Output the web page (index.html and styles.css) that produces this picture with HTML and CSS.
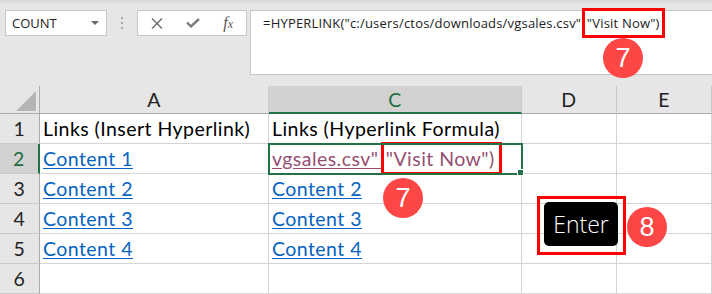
FILE: index.html
```html
<!DOCTYPE html>
<html lang="en">
<head>
    <meta charset="UTF-8">
    <title>Excel - HYPERLINK</title>
    <link rel="stylesheet" href="styles.css">
</head>
<body>
    <div class="toolbar">
        <div class="namebox">
            <span>COUNT</span>
            <span class="caret"></span>
        </div>
        <div class="dots"><span></span><span></span><span></span></div>
        <div class="fxbox">
            <span class="btn">
                <svg width="12" height="11" viewBox="0 0 12 11"><path d="M1 0.5 L11 10.5 M11 0.5 L1 10.5" stroke="#6b6b6b" stroke-width="1.4" fill="none"/></svg>
            </span>
            <span class="btn">
                <svg width="14" height="10" viewBox="0 0 14 10"><path d="M1 4.5 L5 8.5 L13 1" stroke="#7d7d7d" stroke-width="2.4" fill="none"/></svg>
            </span>
            <span class="btn fx"><i>f<small>x</small></i></span>
        </div>
        <div class="formula">=HYPERLINK("c:/users/ctos/downloads/vgsales.csv" <span class="mark-top">"Visit Now")</span></div>
    </div>

    <div class="sheet">
        <div class="corner"></div>
        <div class="colhead">A</div>
        <div class="colhead sel">C</div>
        <div class="colhead">D</div>
        <div class="colhead">E</div>

        <div class="rowhead">1</div>
        <div class="cell">Links (Insert Hyperlink)</div>
        <div class="cell">Links (Hyperlink Formula)</div>
        <div class="cell"></div>
        <div class="cell"></div>

        <div class="rowhead sel">2</div>
        <div class="cell"><a href="#">Content 1</a></div>
        <div class="cell active"><a href="#" class="visited">vgsales.csv" <span class="mark-cell">"Visit Now")</span></a></div>
        <div class="cell"></div>
        <div class="cell"></div>

        <div class="rowhead">3</div>
        <div class="cell"><a href="#">Content 2</a></div>
        <div class="cell"><a href="#">Content 2</a></div>
        <div class="cell"></div>
        <div class="cell"></div>

        <div class="rowhead">4</div>
        <div class="cell"><a href="#">Content 3</a></div>
        <div class="cell"><a href="#">Content 3</a></div>
        <div class="cell"></div>
        <div class="cell"></div>

        <div class="rowhead">5</div>
        <div class="cell"><a href="#">Content 4</a></div>
        <div class="cell"><a href="#">Content 4</a></div>
        <div class="cell"></div>
        <div class="cell"></div>

        <div class="rowhead">6</div>
        <div class="cell"></div>
        <div class="cell"></div>
        <div class="cell"></div>
        <div class="cell"></div>
    </div>

    <!-- annotations -->
    <div class="badge badge-top">7</div>
    <div class="badge badge-cell">7</div>
    <div class="key-wrap"><div class="key">Enter</div></div>
    <div class="badge badge-key">8</div>
</body>
</html>
```

FILE: styles.css
```css
* {
    margin: 0;
    padding: 0;
    box-sizing: border-box;
}

body {
    width: 712px;
    height: 294px;
    overflow: hidden;
    position: relative;
    background: #e6e6e6;
    font-family: Lato, sans-serif;
    color: #000;
}

/* formula bar */
.toolbar {
    height: 86px;
    display: flex;
    align-items: flex-start;
    padding: 10px 0 0 5px;
    background: linear-gradient(#d4d4d4 0, #e6e6e6 4px);
}

.namebox {
    width: 102px;
    height: 26px;
    background: #fff;
    border: 1px solid #c6c6c6;
    display: flex;
    align-items: center;
    justify-content: space-between;
    padding: 0 6px 0 6px;
    font-family: "Open Sans", sans-serif;
    font-size: 13px;
    color: #222;
}

.caret {
    border-left: 4px solid transparent;
    border-right: 4px solid transparent;
    border-top: 4px solid #6a6a6a;
    margin-right: 1px;
}

.dots {
    width: 30px;
    display: flex;
    flex-direction: column;
    align-items: center;
    gap: 3px;
    padding-top: 7px;
}

.dots span {
    width: 2px;
    height: 2px;
    background: #a8a8a8;
}

.fxbox {
    width: 110px;
    height: 26px;
    background: #fff;
    border: 1px solid #c6c6c6;
    display: flex;
    align-items: center;
    padding-left: 1px;
}

.btn {
    width: 36px;
    display: flex;
    align-items: center;
    justify-content: center;
}

.fx {
    font-family: "Liberation Serif", serif;
    font-size: 16px;
    color: #555;
}

.fx small {
    font-size: 12px;
}

.formula {
    flex: 1;
    height: 65px;
    margin-left: 3px;
    background: #fff;
    border: 1px solid #c6c6c6;
    border-right: none;
    padding: 3px 0 0 12px;
    font-family: "Open Sans", sans-serif;
    font-size: 13px;
    letter-spacing: 0.2px;
    line-height: 18px;
    color: #222;
    white-space: nowrap;
}

.mark-top {
    outline: 3px solid #ff0000;
    padding: 3px 2px 3px 2px;
}

/* grid */
.sheet {
    display: grid;
    grid-template-columns: 40px 229px 253px 95px 95px;
    grid-template-rows: 28px repeat(6, 30px);
    background: #fff;
    font-size: 19.5px;
    letter-spacing: 0.45px;
}

.corner {
    position: relative;
    background: #e6e6e6;
    border-right: 1px solid #ababab;
    border-bottom: 1px solid #ababab;
}

.corner::after {
    content: "";
    position: absolute;
    right: 3px;
    bottom: 2px;
    border-left: 20px solid transparent;
    border-bottom: 20px solid #b5b5b5;
}

.colhead {
    background: #e6e6e6;
    border-right: 1px solid #cacaca;
    border-bottom: 1px solid #ababab;
    text-align: center;
    line-height: 28px;
    color: #222;
}

.colhead.sel {
    background: #d2d2d2;
    color: #1d6b40;
    border-bottom: 2px solid #217346;
}

.rowhead {
    background: #e6e6e6;
    border-right: 1px solid #ababab;
    border-bottom: 1px solid #cacaca;
    text-align: center;
    line-height: 28px;
    padding-top: 1px;
    color: #222;
}

.rowhead.sel {
    background: #d2d2d2;
    color: #1d6b40;
    border-right: 2px solid #217346;
}

.cell {
    border-right: 1px solid #d4d4d4;
    border-bottom: 1px solid #d4d4d4;
    padding: 1px 0 0 3px;
    line-height: 28px;
    white-space: nowrap;
}

.cell.active {
    position: relative;
    outline: 2px solid #217346;
    outline-offset: -1px;
    z-index: 1;
}

.cell.active::after {
    content: "";
    position: absolute;
    right: -3px;
    bottom: -3px;
    width: 5px;
    height: 5px;
    background: #217346;
    border: 1px solid #fff;
}

a {
    color: #0563c1;
    text-decoration: underline;
    text-underline-offset: 2px;
}

a.visited {
    color: #954f72;
}

.mark-cell {
    display: inline-block;
    line-height: 27px;
    outline: 3px solid #ff0000;
    padding: 0 4px 0 2px;
}

/* annotations */
.badge {
    position: absolute;
    width: 40px;
    height: 40px;
    border-radius: 50%;
    background: #fd4646;
    color: #fff;
    font-family: "Liberation Sans", sans-serif;
    font-size: 27px;
    display: flex;
    align-items: center;
    justify-content: center;
}

.badge-top {
    left: 603px;
    top: 38px;
}

.badge-cell {
    left: 383px;
    top: 178px;
}

.badge-key {
    left: 627px;
    top: 207px;
}

.key-wrap {
    position: absolute;
    left: 537px;
    top: 196px;
    width: 89px;
    height: 59px;
    border: 3px solid #ff0000;
    padding: 3px 5px 6px 4px;
}

.key {
    height: 100%;
    background: #000;
    border-radius: 5px;
    color: #fff;
    font-family: "Open Sans", sans-serif;
    font-weight: 300;
    font-size: 23px;
    display: flex;
    align-items: center;
    justify-content: center;
}
```
